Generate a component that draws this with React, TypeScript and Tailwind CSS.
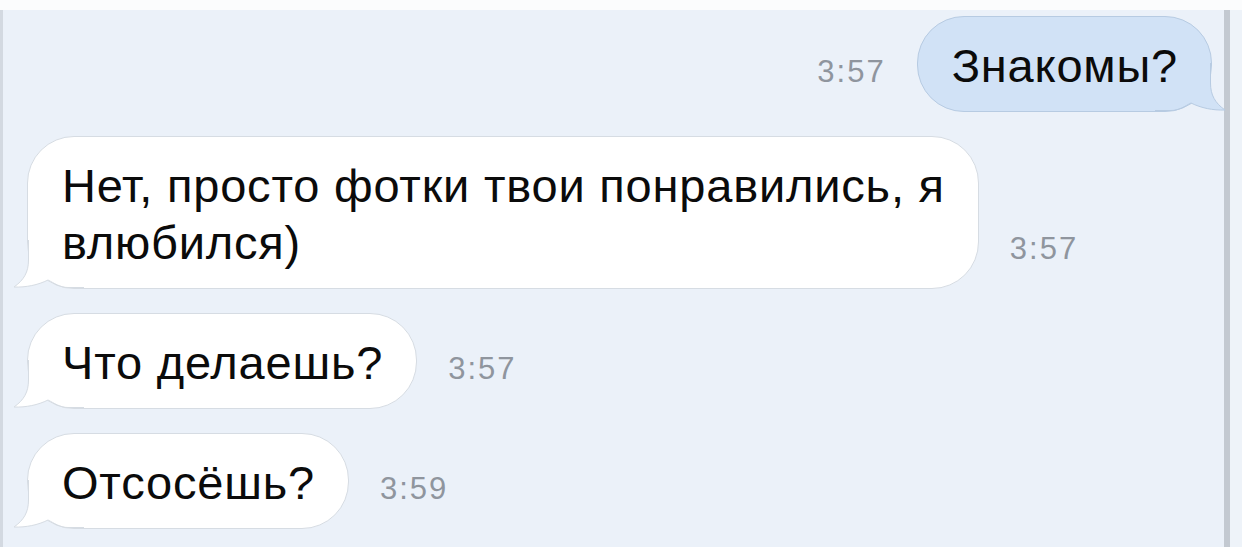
import React from 'react';

type Msg = {
  id: number;
  text: string;
  time: string;
  out?: boolean;
};

const messages: Msg[] = [
  { id: 1, text: 'Знакомы?', time: '3:57', out: true },
  { id: 2, text: 'Нет, просто фотки твои понравились, я\nвлюбился)', time: '3:57' },
  { id: 3, text: 'Что делаешь?', time: '3:57' },
  { id: 4, text: 'Отсосёшь?', time: '3:59' },
];

function Tail({ out }: { out?: boolean }) {
  const fill = out ? '#d1e2f6' : '#ffffff';
  const stroke = out ? '#b7cbe2' : '#d6dce3';
  return (
    <svg
      width="72"
      height="48"
      viewBox="0 0 72 48"
      className={
        out
          ? 'absolute -right-[16px] bottom-0 -scale-x-100 pointer-events-none'
          : 'absolute -left-[16px] bottom-0 pointer-events-none'
      }
    >
      <path
        d="M16.5 0 L72 0 L72 46.5 L56 46.5 C48 46.5 42 43 36 40 C26 45 14 47.5 2 47 C12 40 16.5 32 16.5 20 Z"
        fill={fill}
      />
      <path
        d="M16.5 0 L16.5 20 C16.5 32 12 40 2 47 C14 47.5 26 45 36 40 C42 43 48 47.5 56 47.5 L72 47.5"
        fill="none"
        stroke={stroke}
        strokeWidth="1"
      />
    </svg>
  );
}

function Bubble({ msg }: { msg: Msg }) {
  return (
    <div
      className={
        'relative shrink-0 border rounded-[47px] pl-[34px] pr-[33px] pt-[20px] pb-[17px] text-[47px] leading-[57px] tracking-[0.8px] whitespace-pre text-[#0b0b0b] ' +
        (msg.out ? 'bg-[#d1e2f6] border-[#b7cbe2]' : 'bg-white border-[#d6dce3]')
      }
    >
      <Tail out={msg.out} />
      <span className="relative">{msg.text}</span>
    </div>
  );
}

function Time({ value }: { value: string }) {
  return (
    <div className="mb-[25px] text-[31px] leading-none tracking-[2px] text-[#8f959e]">{value}</div>
  );
}

export default function App() {
  return (
    <div
      className="w-[1242px] h-[547px] flex flex-col bg-[#fbfcfd] overflow-hidden"
      style={{ fontFamily: '"Liberation Sans", Arial, sans-serif' }}
    >
      <div className="h-[10px] shrink-0" />
      <div className="flex flex-1 min-h-0">
        <div className="w-[3px] bg-[#d3d9e1]" />
        <div className="flex-1 bg-[#ebf1f9] pt-[6px] pl-[24px] pr-[12px] flex flex-col gap-[24px]">
          {messages.map((m) =>
            m.out ? (
              <div key={m.id} className="flex justify-end items-end gap-[31px]">
                <Time value={m.time} />
                <Bubble msg={m} />
              </div>
            ) : (
              <div key={m.id} className="flex items-end gap-[31px]">
                <Bubble msg={m} />
                <Time value={m.time} />
              </div>
            )
          )}
        </div>
        <div className="w-[6px] bg-[#c3c9d1]" />
        <div className="w-[12px] bg-[#eef3f9]" />
      </div>
    </div>
  );
}
